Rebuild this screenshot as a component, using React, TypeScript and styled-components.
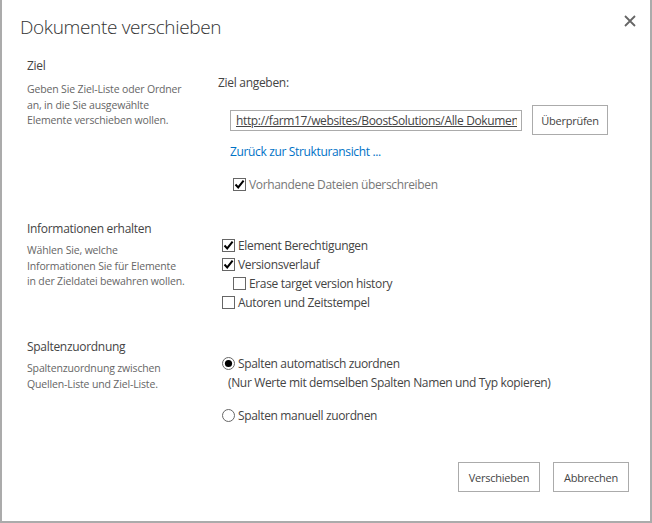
import { ReactElement } from 'react';
import styled, { createGlobalStyle } from 'styled-components';

const GlobalStyle = createGlobalStyle`
  html, body {
    margin: 0;
    padding: 0;
    background: #fff;
  }
  body {
    font-family: "Open Sans", "Noto Sans", sans-serif;
    color: #444;
  }
`;

const Dialog = styled.div`
  box-sizing: border-box;
  width: 652px;
  height: 523px;
  border: 2px solid #ababab;
  border-top: none;
  background: #fff;
  display: flex;
  flex-direction: column;
`;

const Header = styled.div`
  display: flex;
  justify-content: space-between;
  align-items: flex-start;
  padding: 14px 12px 0 18px;
  height: 46px;
  box-sizing: border-box;
`;

const Title = styled.h1`
  margin: 0;
  font-size: 19px;
  font-weight: 300;
  color: #333;
  letter-spacing: -0.35px;
`;

const CloseButton = styled.button`
  border: none;
  background: none;
  padding: 0;
  margin-top: 1px;
  width: 14px;
  height: 14px;
  cursor: pointer;
  display: flex;
`;

const Body = styled.div`
  flex: 1;
  padding: 0 0 0 25px;
`;

const Section = styled.div<{ $top: number }>`
  display: grid;
  grid-template-columns: 191px 1fr;
  margin-top: ${(p) => p.$top}px;
`;

const SectionInfo = styled.div``;

const SectionTitle = styled.div`
  font-size: 12px;
  color: #444;
  line-height: 16px;
  letter-spacing: -0.3px;
`;

const SectionDesc = styled.div<{ $top: number }>`
  font-size: 10.5px;
  color: #666;
  line-height: 15.5px;
  letter-spacing: -0.15px;
  margin-top: ${(p) => p.$top}px;
`;

const SectionFields = styled.div<{ $top: number }>`
  padding-top: ${(p) => p.$top}px;
  display: flex;
  flex-direction: column;
  align-items: flex-start;
`;

const FieldLabel = styled.div`
  font-size: 12px;
  line-height: 16px;
  color: #444;
  letter-spacing: -0.3px;
`;

const InputRow = styled.div`
  display: flex;
  align-items: center;
  gap: 10px;
  margin: 14px 0 0 12px;
`;

const UrlInput = styled.input`
  box-sizing: border-box;
  width: 292px;
  height: 21px;
  border: 1px solid #ababab;
  padding: 0 4px 0 5px;
  font-family: inherit;
  font-size: 12px;
  letter-spacing: -0.35px;
  color: #444;
  text-decoration: underline;
  outline: none;
`;

const Button = styled.button<{ $width: number }>`
  box-sizing: border-box;
  width: ${(p) => p.$width}px;
  height: 30px;
  border: 1px solid #ababab;
  background: #fff;
  font-family: inherit;
  font-size: 11px;
  letter-spacing: -0.25px;
  color: #444;
  cursor: pointer;
`;

const Link = styled.a`
  margin: 9px 0 0 12px;
  font-size: 12px;
  line-height: 16px;
  letter-spacing: -0.35px;
  color: #0072c6;
  text-decoration: none;
  cursor: pointer;
`;

const OptionRow = styled.label<{ $indent?: number; $muted?: boolean; $top?: number }>`
  display: flex;
  align-items: center;
  gap: 3px;
  margin-left: ${(p) => p.$indent ?? 0}px;
  margin-top: ${(p) => p.$top ?? 0}px;
  height: 19px;
  font-size: 12px;
  letter-spacing: -0.35px;
  color: ${(p) => (p.$muted ? '#777' : '#444')};
  cursor: pointer;
`;

const Note = styled.div`
  margin: 2px 0 0 10px;
  font-size: 12px;
  line-height: 16px;
  letter-spacing: -0.35px;
  color: #444;
`;

const Footer = styled.div`
  display: flex;
  justify-content: flex-end;
  gap: 13px;
  padding: 0 21px 29px 0;
`;

function CheckBox({ checked }: { checked: boolean }): ReactElement {
  return (
    <svg width="13" height="13" viewBox="0 0 13 13">
      <rect x="0.5" y="0.5" width="12" height="12" fill="#fff" stroke="#666" />
      {checked && (
        <path d="M2.5 6.5 L5.2 9.4 L10.6 2.6" fill="none" stroke="#000" strokeWidth="2" />
      )}
    </svg>
  );
}

function Radio({ checked }: { checked: boolean }): ReactElement {
  return (
    <svg width="13" height="13" viewBox="0 0 13 13">
      <circle cx="6.5" cy="6.5" r="6" fill="#fff" stroke="#666" />
      {checked && <circle cx="6.5" cy="6.5" r="3.6" fill="#000" />}
    </svg>
  );
}

export default function App(): ReactElement {
  return (
    <>
      <GlobalStyle />
      <Dialog>
        <Header>
          <Title>Dokumente verschieben</Title>
          <CloseButton aria-label="Schließen">
            <svg width="12" height="12" viewBox="0 0 12 12">
              <path d="M1 1 L11 11 M11 1 L1 11" stroke="#666" strokeWidth="1.8" />
            </svg>
          </CloseButton>
        </Header>

        <Body>
          <Section $top={12}>
            <SectionInfo>
              <SectionTitle>Ziel</SectionTitle>
              <SectionDesc $top={8}>
                Geben Sie Ziel-Liste oder Ordner
                <br />
                an, in die Sie ausgewählte
                <br />
                Elemente verschieben wollen.
              </SectionDesc>
            </SectionInfo>
            <SectionFields $top={17}>
              <FieldLabel>Ziel angeben:</FieldLabel>
              <InputRow>
                <UrlInput readOnly value="http://farm17/websites/BoostSolutions/Alle Dokumente" />
                <Button $width={76}>Überprüfen</Button>
              </InputRow>
              <Link>Zurück zur Strukturansicht ...</Link>
              <OptionRow $indent={15} $top={15} $muted>
                <CheckBox checked />
                Vorhandene Dateien überschreiben
              </OptionRow>
            </SectionFields>
          </Section>

          <Section $top={27}>
            <SectionInfo>
              <SectionTitle>Informationen erhalten</SectionTitle>
              <SectionDesc $top={6}>
                Wählen Sie, welche
                <br />
                Informationen Sie für Elemente
                <br />
                in der Zieldatei bewahren wollen.
              </SectionDesc>
            </SectionInfo>
            <SectionFields $top={15}>
              <OptionRow $indent={4}>
                <CheckBox checked />
                Element Berechtigungen
              </OptionRow>
              <OptionRow $indent={4}>
                <CheckBox checked />
                Versionsverlauf
              </OptionRow>
              <OptionRow $indent={15}>
                <CheckBox checked={false} />
                Erase target version history
              </OptionRow>
              <OptionRow $indent={4}>
                <CheckBox checked={false} />
                Autoren und Zeitstempel
              </OptionRow>
            </SectionFields>
          </Section>

          <Section $top={27}>
            <SectionInfo>
              <SectionTitle>Spaltenzuordnung</SectionTitle>
              <SectionDesc $top={6}>
                Spaltenzuordnung zwischen
                <br />
                Quellen-Liste und Ziel-Liste.
              </SectionDesc>
            </SectionInfo>
            <SectionFields $top={15}>
              <OptionRow $indent={4}>
                <Radio checked />
                Spalten automatisch zuordnen
              </OptionRow>
              <Note>(Nur Werte mit demselben Spalten Namen und Typ kopieren)</Note>
              <OptionRow $indent={4} $top={15}>
                <Radio checked={false} />
                Spalten manuell zuordnen
              </OptionRow>
            </SectionFields>
          </Section>
        </Body>

        <Footer>
          <Button $width={82}>Verschieben</Button>
          <Button $width={76}>Abbrechen</Button>
        </Footer>
      </Dialog>
    </>
  );
}
